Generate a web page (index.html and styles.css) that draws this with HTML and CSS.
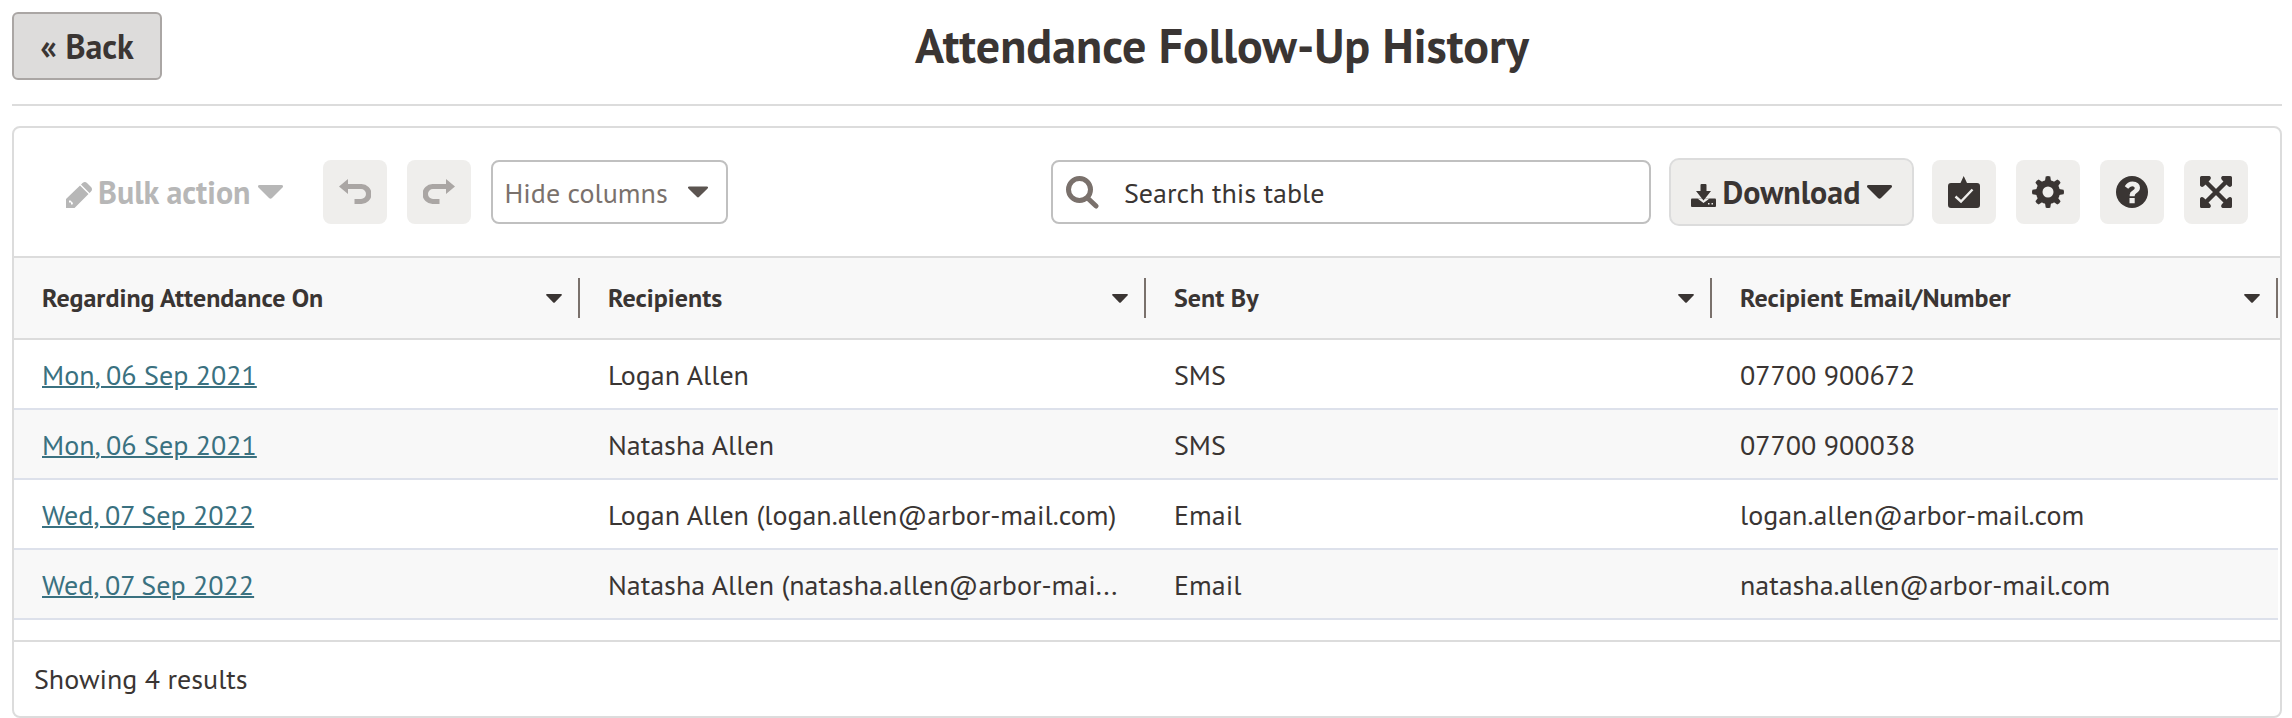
FILE: index.html
```html
<!DOCTYPE html>
<html lang="en">
<head>
    <meta charset="UTF-8">
    <meta name="viewport" content="width=device-width, initial-scale=1.0">
    <title>Attendance Follow-Up History</title>
    <link rel="stylesheet" href="styles.css">
</head>
<body>
    <header class="page-header">
        <button type="button" class="back-btn">« Back</button>
        <h1>Attendance Follow-Up History</h1>
    </header>

    <div class="card">
        <div class="toolbar">
            <button type="button" class="bulk-btn" disabled>
                <svg class="pencil" viewBox="0 0 26 26"><path d="M0 26V17L14 3.500L22.500 12L8.500 26ZM15 2.500L16.500 1Q19 -1 21 1L25 5Q27 7 25 9.500L23.500 11Z"/><path class="hole" d="M3 18.500L3 20.500H5V22.500H6.500L7 21L4.500 18.500Z"/></svg>
                <span>Bulk action</span>
                <svg class="caret" viewBox="0 0 25 14"><path d="M1.500 0H23.500Q26 .5 24.500 2.500L14 13Q12.500 14.500 11 13L.5 2.500Q-1 .5 1.500 0Z"/></svg>
            </button>
            <button type="button" class="icon-btn undo" disabled>
                <svg viewBox="0 0 32 32"><path d="M9 3V8H22.500A10 10 0 0 1 22.500 28H15.500V23H22A5 5 0 0 0 22 13H9V18L0 10.500Z"/></svg>
            </button>
            <button type="button" class="icon-btn redo" disabled>
                <svg viewBox="0 0 32 32"><path d="M23 3V8H9.500A10 10 0 0 0 9.500 28H16.500V23H10A5 5 0 0 1 10 13H23V18L32 10.500Z"/></svg>
            </button>
            <div class="select">
                <span>Hide columns</span>
                <svg class="caret" viewBox="0 0 25 14"><path d="M1.500 0H23.500Q26 .5 24.500 2.500L14 13Q12.500 14.500 11 13L.5 2.500Q-1 .5 1.500 0Z"/></svg>
            </div>

            <div class="search">
                <svg viewBox="0 0 33 33"><circle cx="13.500" cy="13.500" r="11"/><path d="M21.500 22L30 30"/></svg>
                <span>Search this table</span>
            </div>
            <button type="button" class="download-btn">
                <svg class="tray" viewBox="0 0 25 23"><path d="M1 14.500H24Q25 14.500 25 15.500V22Q25 23 24 23H1Q0 23 0 22V15.500Q0 14.500 1 14.500Z"/><path class="hole" d="M6.500 14.500H18.500L12.500 19ZM17 19H18.500V20.500H17ZM20.500 19H22V20.500H20.500Z"/><path d="M9.500 1Q9.500 0 10.500 0H14.500Q15.500 0 15.500 1V7H20L12.500 16.500L5 7H9.500Z"/></svg>
                <span>Download</span>
                <svg class="caret" viewBox="0 0 25 14"><path d="M1.500 0H23.500Q26 .5 24.500 2.500L14 13Q12.500 14.500 11 13L.5 2.500Q-1 .5 1.500 0Z"/></svg>
            </button>
            <button type="button" class="icon-btn">
                <svg viewBox="0 0 32 32"><path d="M15.700 0L19 7H29Q32 7 32 10V29Q32 32 29 32H3Q0 32 0 29V10Q0 7 3 7H12.500Z"/><path class="tick" d="M7.500 20.500L13 25.500L24.500 13.500"/></svg>
            </button>
            <button type="button" class="icon-btn">
                <svg viewBox="0 0 32 32"><g id="teeth"><path id="tooth" d="M13 5L13.700 .5Q16 -.5 18.300 .5L19 5V27L18.300 31.500Q16 32.500 13.700 31.500L13 27Z"/><use href="#tooth" transform="rotate(45 16 16)"/><use href="#tooth" transform="rotate(90 16 16)"/><use href="#tooth" transform="rotate(135 16 16)"/></g><circle cx="16" cy="16" r="12"/><circle class="hole" cx="16" cy="16" r="5.500"/></svg>
            </button>
            <button type="button" class="icon-btn">
                <svg viewBox="0 0 32 32"><circle cx="16" cy="16" r="16"/><path class="hole" d="M13.500 22H18.700V27.200H13.500ZM13.700 20.300V18.600Q13.800 16.200 16.700 14.600Q18.800 13.300 18.800 11.900Q18.600 10.200 16.200 10.200Q14 10.200 12.200 12.800L8.800 10.200Q11.300 5.500 16.500 5.500Q23.700 5.900 24 11.600Q24 15.300 20.300 17.200Q18.600 18.200 18.600 20.300Z"/></svg>
            </button>
            <button type="button" class="icon-btn">
                <svg viewBox="0 0 32 32"><path class="arms" d="M5 5L27 27M27 5L5 27"/><path d="M1.500 0H9.500Q12 1.500 10 4L4 10Q1.500 12 0 9.500V1.500Q0 0 1.500 0ZM30.500 0H22.500Q20 1.500 22 4L28 10Q30.500 12 32 9.500V1.500Q32 0 30.500 0ZM1.500 32H9.500Q12 30.500 10 28L4 22Q1.500 20 0 22.500V30.500Q0 32 1.500 32ZM30.500 32H22.500Q20 30.500 22 28L28 22Q30.500 20 32 22.500V30.500Q32 32 30.500 32Z"/></svg>
            </button>
        </div>

        <div class="row head">
            <div class="cell"><span>Regarding Attendance On</span><svg class="caret" viewBox="0 0 16 9"><path d="M1 0H15Q16.500 .3 15.500 1.500L9 8.300Q8 9.300 7 8.300L.5 1.500Q-.5 .3 1 0Z"/></svg></div>
            <div class="cell"><span>Recipients</span><svg class="caret" viewBox="0 0 16 9"><path d="M1 0H15Q16.500 .3 15.500 1.500L9 8.300Q8 9.300 7 8.300L.5 1.500Q-.5 .3 1 0Z"/></svg></div>
            <div class="cell"><span>Sent By</span><svg class="caret" viewBox="0 0 16 9"><path d="M1 0H15Q16.500 .3 15.500 1.500L9 8.300Q8 9.300 7 8.300L.5 1.500Q-.5 .3 1 0Z"/></svg></div>
            <div class="cell"><span>Recipient Email/Number</span><svg class="caret" viewBox="0 0 16 9"><path d="M1 0H15Q16.500 .3 15.500 1.500L9 8.300Q8 9.300 7 8.300L.5 1.500Q-.5 .3 1 0Z"/></svg></div>
        </div>
        <div class="rows">
            <div class="row">
                <div class="cell"><a href="#">Mon, 06 Sep 2021</a></div>
                <div class="cell">Logan Allen</div>
                <div class="cell">SMS</div>
                <div class="cell">07700 900672</div>
            </div>
            <div class="row">
                <div class="cell"><a href="#">Mon, 06 Sep 2021</a></div>
                <div class="cell">Natasha Allen</div>
                <div class="cell">SMS</div>
                <div class="cell">07700 900038</div>
            </div>
            <div class="row">
                <div class="cell"><a href="#">Wed, 07 Sep 2022</a></div>
                <div class="cell">Logan Allen (logan.allen@arbor-mail.com)</div>
                <div class="cell">Email</div>
                <div class="cell">logan.allen@arbor-mail.com</div>
            </div>
            <div class="row">
                <div class="cell"><a href="#">Wed, 07 Sep 2022</a></div>
                <div class="cell">Natasha Allen (natasha.allen@arbor-mai...</div>
                <div class="cell">Email</div>
                <div class="cell">natasha.allen@arbor-mail.com</div>
            </div>
        </div>
        <div class="footer">Showing 4 results</div>
    </div>
</body>
</html>
```
FILE: styles.css
```css
* {
    box-sizing: border-box;
}
body {
    margin: 0;
    padding: 12px 10px 0 12px;
    background-color: #fff;
    color: #3a3533;
    font-family: "PT Sans", "Noto Sans", sans-serif;
    font-size: 28px;
    line-height: 36px;
}
button {
    padding: 0;
    border: none;
    color: inherit;
    font-family: inherit;
    font-weight: bold;
    cursor: pointer;
}
svg {
    display: block;
    flex: none;
    fill: currentColor;
}
.page-header {
    display: flex;
    align-items: flex-start;
    height: 94px;
    border-bottom: 2px solid #dcdcdc;
}
.back-btn {
    width: 150px;
    height: 68px;
    padding-bottom: 1px;
    background-color: #dddcdb;
    border: 2px solid #aaa6a4;
    border-radius: 6px;
    font-size: 34px;
}
h1 {
    flex: 1;
    margin: 0;
    font-size: 48px;
    line-height: 66px;
    text-align: center;
}
.card {
    height: 592px;
    margin-top: 20px;
    border: 2px solid #dcdcdc;
    border-radius: 8px;
    overflow: hidden;
}

/* Toolbar */
.toolbar {
    display: flex;
    align-items: center;
    height: 128px;
    padding: 0 32px 0 52px;
}
.caret {
    width: 25px;
    height: 14px;
}
.bulk-btn {
    display: flex;
    align-items: center;
    background: none;
    color: #b7b7b7;
    font-size: 32px;
    margin-right: 40px;
}
.pencil {
    width: 26px;
    height: 26px;
    margin: 6px 6px 0 0;
}
.hole {
    fill: #fff;
}
.bulk-btn .caret,
.download-btn .caret {
    margin: 0 0 0 7px;
}
.icon-btn {
    display: flex;
    align-items: center;
    justify-content: center;
    width: 64px;
    height: 64px;
    margin-left: 20px;
    background-color: #efeeec;
    border-radius: 8px;
}
.icon-btn svg {
    width: 32px;
    height: 32px;
}
.icon-btn .hole,
.download-btn .hole {
    fill: #efeeec;
}
.undo,
.redo {
    color: #aaa6a4;
}
.undo {
    margin-left: 0;
}
.tick {
    fill: none;
    stroke: #efeeec;
    stroke-width: 2.4;
}
.arms {
    fill: none;
    stroke: currentColor;
    stroke-width: 4.5;
}
.select {
    display: flex;
    align-items: center;
    justify-content: space-between;
    width: 237px;
    height: 64px;
    margin-left: 20px;
    padding: 0 18px 0 12px;
    border: 2px solid #c0c0c0;
    border-radius: 8px;
    color: #7a716c;
}
.select .caret {
    width: 20px;
    height: 12px;
    color: #5b5450;
}
.search {
    display: flex;
    align-items: center;
    width: 600px;
    height: 64px;
    margin-left: auto;
    padding-left: 13px;
    border: 2px solid #c0c0c0;
    border-radius: 8px;
}
.search svg {
    width: 33px;
    height: 33px;
    margin-right: 25px;
    fill: none;
    stroke: #7a716c;
    stroke-width: 5;
    stroke-linecap: round;
}
.search span,
.select span {
    padding-top: 1px;
}
.download-btn {
    display: flex;
    align-items: center;
    justify-content: center;
    width: 245px;
    height: 68px;
    margin: 0 -2px 0 18px;
    background-color: #efeeec;
    border: 2px solid #dcdcdc;
    border-radius: 10px;
    font-size: 32px;
}
.tray {
    width: 25px;
    height: 23px;
    margin: 7px 7px 0 0;
}

/* Table */
.row {
    display: grid;
    grid-template-columns: repeat(4, 566px);
    width: 2264px;
    height: 70px;
    border-bottom: 2px solid #dde1eb;
}
.row:nth-child(even) {
    background-color: #f8f8f8;
}
.cell {
    padding: 0 28px;
    line-height: 69px;
    white-space: nowrap;
}
.cell a {
    color: #3a7180;
    text-decoration: underline;
    text-decoration-thickness: 2px;
}
.row.head {
    width: auto;
    height: 84px;
    background-color: #f8f8f8;
    border-top: 2px solid #dcdcdc;
    border-bottom: 2px solid #dcdcdc;
    font-size: 26px;
    font-weight: bold;
}
.head .cell {
    display: flex;
    align-items: center;
    justify-content: space-between;
    height: 40px;
    margin-top: 20px;
    padding-right: 16px;
    border-right: 2px solid #7a716c;
    line-height: 40px;
}
.head .caret {
    width: 16px;
    height: 9px;
}
.footer {
    margin-top: 20px;
    padding-left: 20px;
    border-top: 2px solid #dcdcdc;
    line-height: 74px;
}
```
